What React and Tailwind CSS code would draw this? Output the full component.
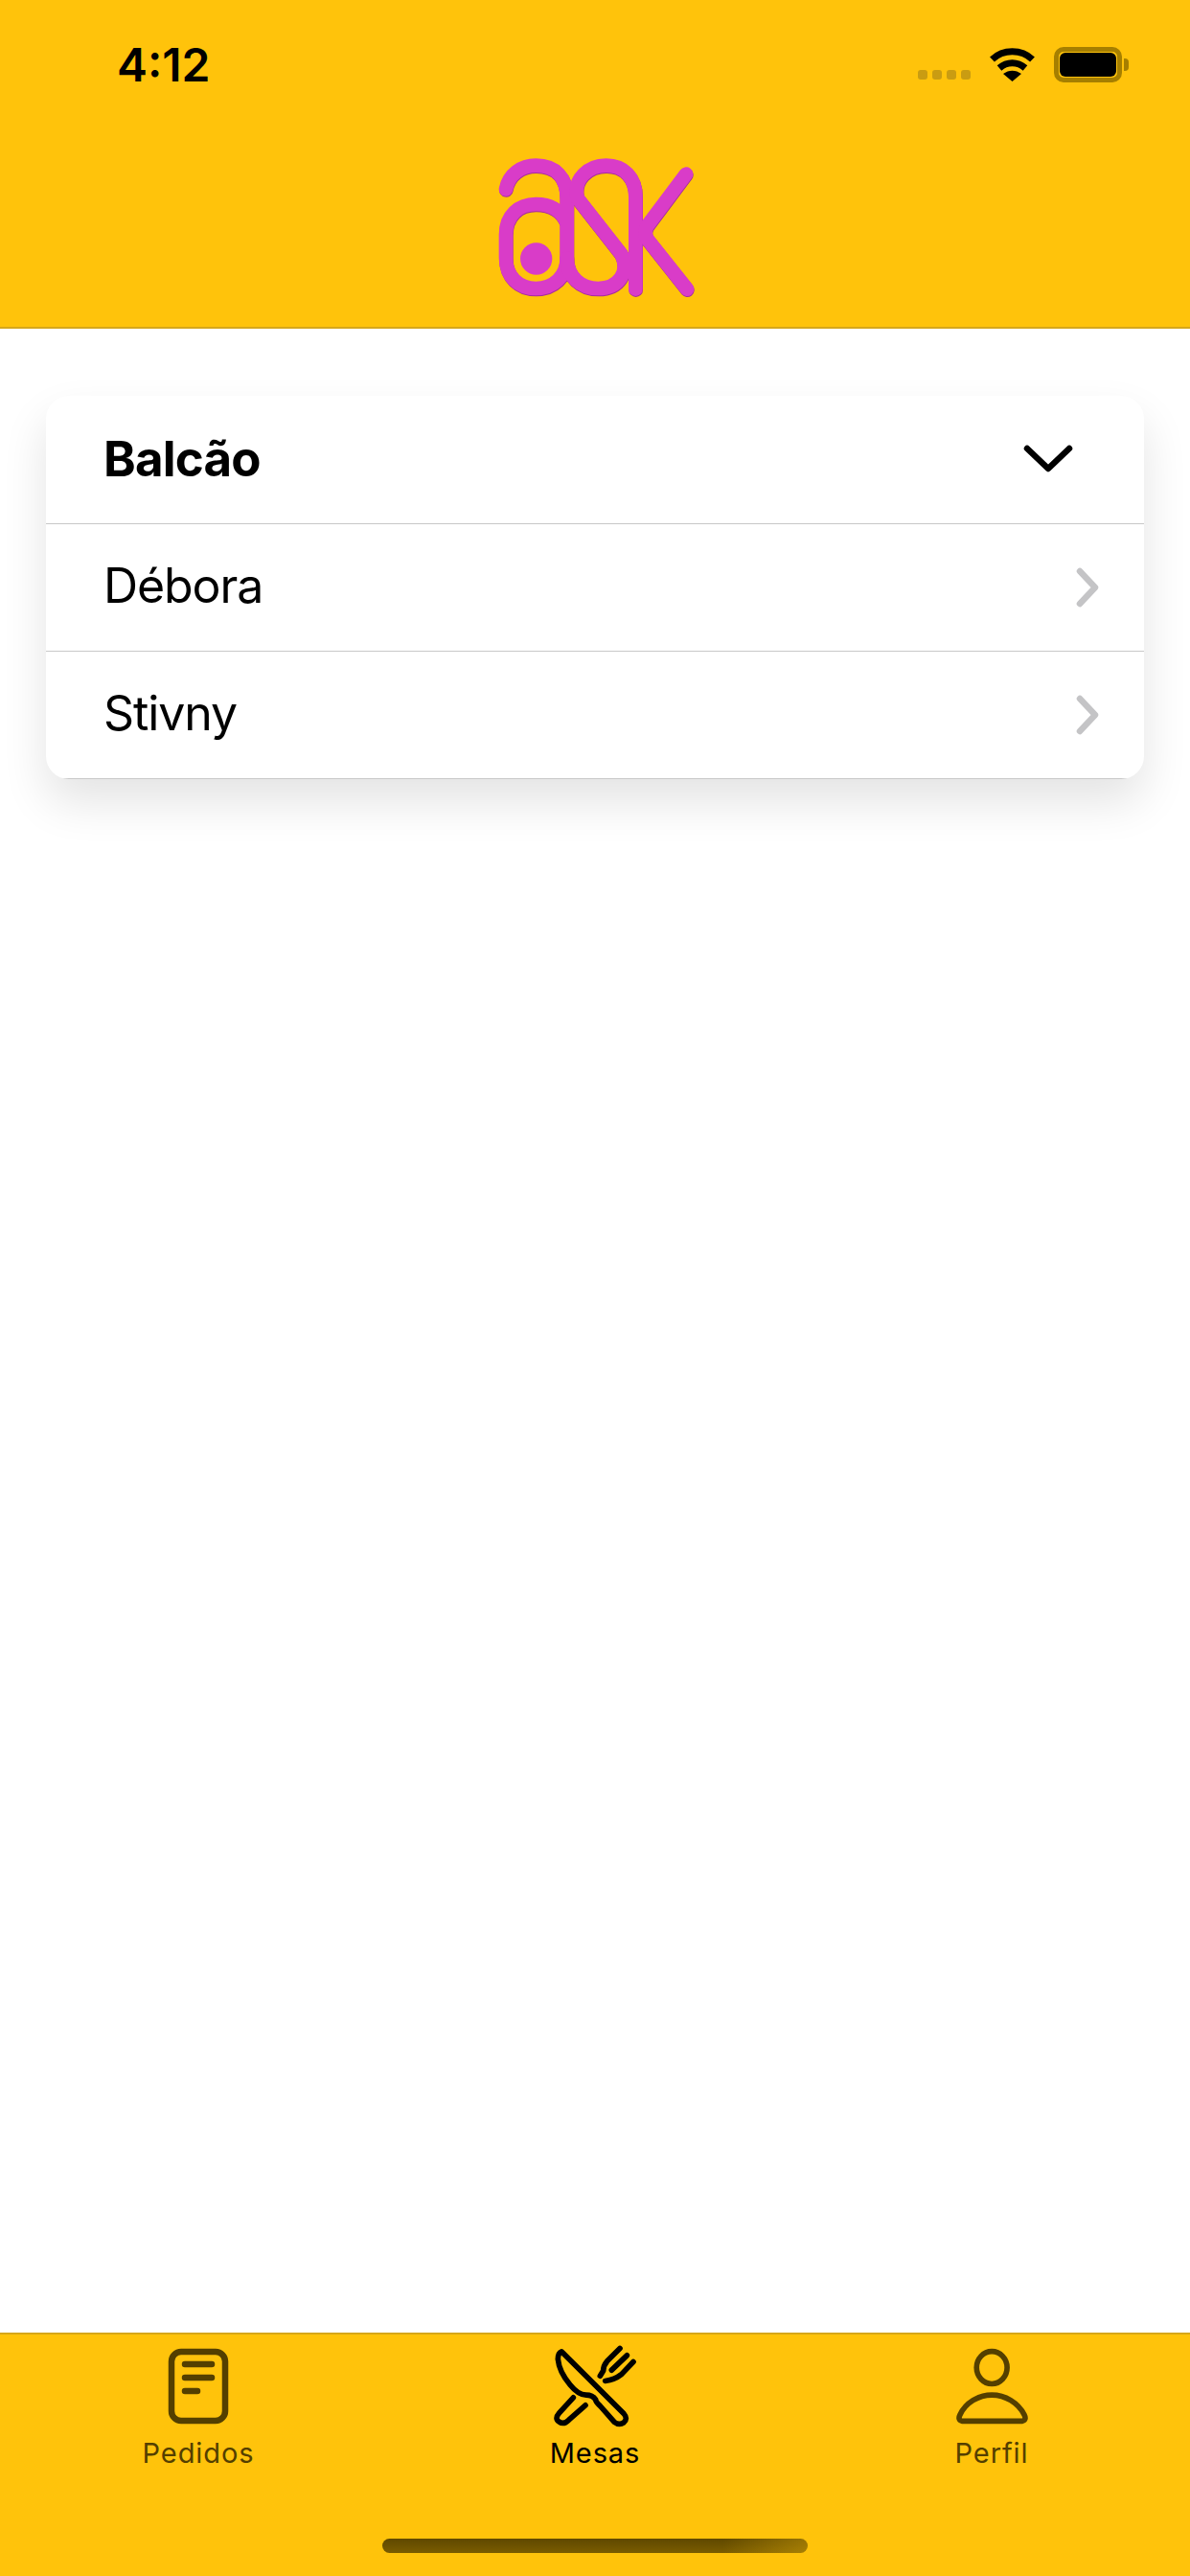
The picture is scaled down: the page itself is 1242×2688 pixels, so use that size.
import React from "react";

const AskLogo = () => (
  <svg viewBox="0 0 780 510" className="w-[260px] h-[170px]" fill="none" strokeLinecap="round" strokeLinejoin="round">
    <g stroke="#a52c9c" strokeWidth="44" transform="translate(1 3)">
      <path d="M111 142C120 95 160 68 205 68C265 68 302 105 302 170V358C302 415 260 453 205 453C150 453 111 415 111 358V284C111 225 150 189 205 189C245 189 285 205 302 250" />
      <path d="M302 358C302 415 345 453 400 453C465 453 500 400 472 345L335 170C320 110 370 68 425 68C480 68 517 105 517 165V455" />
      <path d="M675 95L555 255Q540 280 555 300L678 455" />
    </g>
    <g stroke="#d93cc8" strokeWidth="44">
      <path d="M111 142C120 95 160 68 205 68C265 68 302 105 302 170V358C302 415 260 453 205 453C150 453 111 415 111 358V284C111 225 150 189 205 189C245 189 285 205 302 250" />
      <path d="M302 358C302 415 345 453 400 453C465 453 500 400 472 345L335 170C320 110 370 68 425 68C480 68 517 105 517 165V455" />
      <path d="M675 95L555 255Q540 280 555 300L678 455" />
    </g>
    <circle cx="206" cy="360" r="50" fill="#d93cc8" />
  </svg>
);

const StatusIcons = () => (
  <div className="flex items-center">
    <div className="flex gap-[5px] mt-[20px] mr-[20px]">
      <span className="w-[10px] h-[10px] rounded-[3px] bg-[#c99c12]" />
      <span className="w-[10px] h-[10px] rounded-[3px] bg-[#c99c12]" />
      <span className="w-[10px] h-[10px] rounded-[3px] bg-[#c99c12]" />
      <span className="w-[10px] h-[10px] rounded-[3px] bg-[#c99c12]" />
    </div>
    <svg viewBox="0 0 47 35" className="w-[47px] h-[35px] mr-[20px]" fill="none" stroke="#000" strokeWidth="7">
      <path d="M2.5 12C14 1 33 1 44.5 12" />
      <path d="M10 21C18 14 29 14 37 21" />
      <path d="M23.5 35L14 27C20 22.5 27 22.5 33 27Z" fill="#000" stroke="none" />
    </svg>
    <div className="w-[71px] h-[37px] rounded-[10px] border-[5px] border-[#a67f00] p-[1px] flex">
      <div className="flex-1 bg-black rounded-[6px]" />
    </div>
    <div className="w-[5px] h-[13px] ml-[2px] rounded-r-[4px] bg-[#a67f00]" />
  </div>
);

const Chevron = () => (
  <svg viewBox="0 0 24 42" className="w-[24px] h-[42px]" fill="none" stroke="#c4c4c6" strokeWidth="6.5" strokeLinecap="round" strokeLinejoin="round">
    <path d="M4 4L20 21L4 38" />
  </svg>
);

const Row = ({ name }) => (
  <div className="h-[133px] border-b border-[#c8c8c8] pl-[60px] pr-[47px] flex items-center justify-between">
    <span className="text-[50px] text-black tracking-[-1.1px] -mt-[3px]">{name}</span>
    <Chevron />
  </div>
);

const PedidosIcon = () => (
  <svg viewBox="0 0 70 84" className="w-[70px] h-[84px]" fill="none" stroke="#543f00" strokeWidth="6.5" strokeLinecap="round">
    <rect x="7" y="6" width="56" height="72" rx="10" />
    <path d="M21 19H49M21 33H49M21 47H34" />
  </svg>
);

const MesasIcon = () => (
  <svg viewBox="85 40 132 130" className="w-[88px] h-[87px]" fill="none" stroke="#000" strokeWidth="8.500" strokeLinecap="round" strokeLinejoin="round">
    <path d="M98.500 50L196 147Q203 155 196 161Q189 166 181 160L159 135Q152 129 152 125Q147 118 137 118Q125 118 112 102Q95 82 93 62Q93 52 98.500 50Z" />
    <path d="M117 122L95 146Q87 155 95 160Q102 165 110 157L136 134" />
    <path d="M190 45L170 65Q164 72 164 80L159 88" />
    <path d="M201 56L177 79" />
    <path d="M211 66L192 86Q182 94 167 96" />
  </svg>
);

const PerfilIcon = () => (
  <svg viewBox="70 44 115 122" className="w-[77px] h-[81px]" fill="none" stroke="#543f00" strokeWidth="8.500" strokeLinejoin="round">
    <ellipse cx="127" cy="75" rx="24" ry="25.500" />
    <path d="M80 159H175Q182 157 178 149C168 130 148 118 127 118C106 118 86 130 77 149Q73 157 80 159Z" />
  </svg>
);

const TabItem = ({ icon, label, active }) => (
  <div className="flex flex-col items-center">
    <div className="h-[90px] flex items-center justify-center">{icon}</div>
    <span className={`mt-[7px] text-[29px] leading-[36px] tracking-[0.9px] ${active ? "text-black" : "text-[#543f00]"}`}>{label}</span>
  </div>
);

export default function App() {
  return (
    <div className="w-[1242px] h-[2688px] flex flex-col bg-white font-['Inter',sans-serif]">
      <header className="h-[343px] shrink-0 bg-[#ffc30b] border-b-2 border-[#d6a71a] flex flex-col">
        <div className="h-[148px] pl-[122px] pr-[64px] pt-[44px] flex items-start justify-between">
          <span className="text-[48px] leading-[48px] font-semibold text-black">4:12</span>
          <div className="mt-[5px]">
            <StatusIcons />
          </div>
        </div>
        <div className="flex justify-center mt-[2px]">
          <AskLogo />
        </div>
      </header>

      <main className="flex-1 px-[48px] pt-[70px]">
        <div className="rounded-[24px] bg-white overflow-hidden shadow-[0_24px_48px_rgba(0,0,0,0.11)]">
          <div className="h-[134px] border-b border-[#c8c8c8] pl-[60px] pr-[74px] flex items-center justify-between">
            <span className="text-[51px] font-bold text-black tracking-[-0.8px]">Balcão</span>
            <svg viewBox="0 0 52 32" className="w-[52px] h-[32px] -mt-[2px]" fill="none" stroke="#000" strokeWidth="6.5" strokeLinecap="round" strokeLinejoin="round">
              <path d="M4 5L26 26L48 5" />
            </svg>
          </div>
          <Row name="Débora" />
          <Row name="Stivny" />
        </div>
      </main>

      <footer className="h-[254px] shrink-0 bg-[#ffc30b] border-t-2 border-[#d6a71a] flex flex-col">
        <div className="grid grid-cols-3 pt-[9px]">
          <TabItem icon={<PedidosIcon />} label="Pedidos" />
          <TabItem icon={<MesasIcon />} label="Mesas" active />
          <TabItem icon={<PerfilIcon />} label="Perfil" />
        </div>
        <div className="flex justify-center mt-[71px]">
          <div className="w-[444px] h-[15px] rounded-full bg-[linear-gradient(to_right,transparent_80%,rgba(255,195,11,0.35)),linear-gradient(to_bottom,#5f4800,#7a5c00)]" />
        </div>
      </footer>
    </div>
  );
}
